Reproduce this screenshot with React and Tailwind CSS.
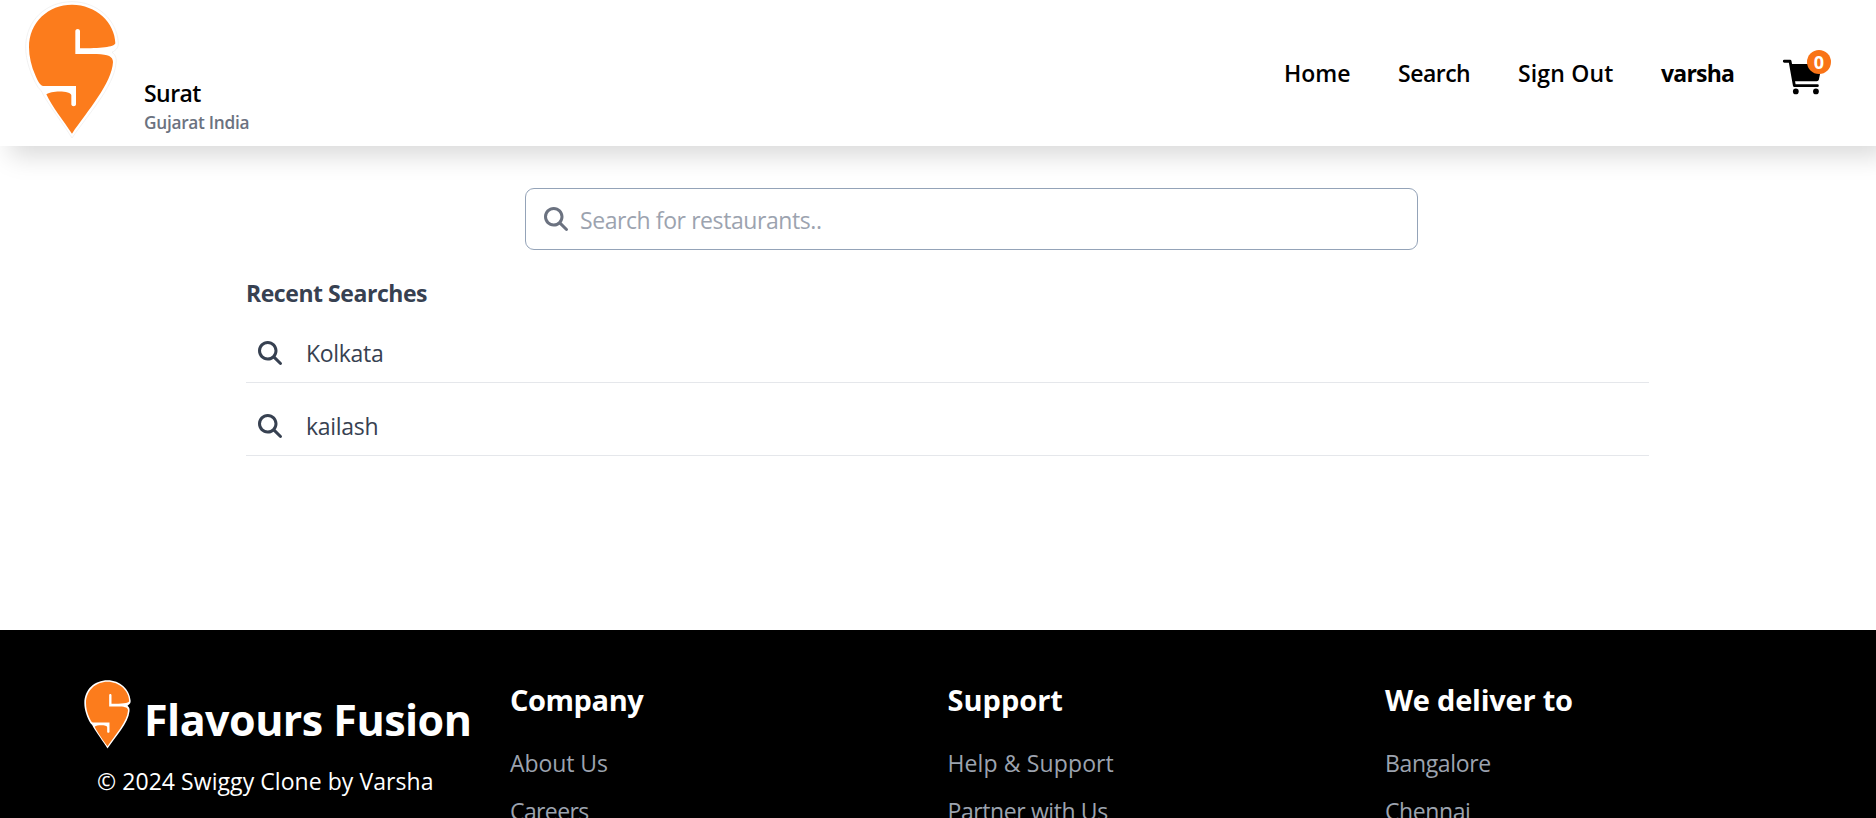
import { FaMagnifyingGlass } from "react-icons/fa6";
import { IoCart } from "react-icons/io5";

function Logo({ className, ringWidth }) {
  return (
    <svg viewBox="75 3 282 414" className={className} preserveAspectRatio="none">
      <path
        d="M216 414C190 372 150 320 130 285C126 274 120 268 114 262C92 225 77 180 77 142C77 60 140 5 216 5C292 5 350 60 355 128C356 140 350 150 336 157C348 165 350 178 348 190C342 260 262 346 216 414Z"
        fill="#fff"
        stroke="#ececec"
        strokeWidth={ringWidth}
      />
      <path
        d="M216 14C288 14 345 68 346 130C343 142 300 145 240 145V94C240 85 226 85 226 94V162H290C325 163 339 170 339 186C336 250 262 333 216 401C190 362 155 318 139 283C152 271 214 271 214 286V313C214 321 228 321 228 313V258H130C120 258 114 244 106 226C94 199 87 170 87 142C87 66 146 14 216 14Z"
        fill="#fc7c1c"
      />
    </svg>
  );
}

const links = [
  { label: "Home", style: "w-[66px]" },
  { label: "Search", style: "w-[72px] tracking-[-0.5px]" },
  { label: "Sign Out", style: "w-[95px] tracking-[0.15px]" },
];

const columns = [
  {
    title: "Company",
    titleStyle: "tracking-[-0.43px]",
    items: [["About Us", "tracking-[-0.06px]"], ["Careers", "tracking-[-0.6px]"]],
  },
  {
    title: "Support",
    titleStyle: "tracking-normal",
    items: [["Help & Support", "tracking-[0.12px]"], ["Partner with Us", "tracking-[-0.4px]"]],
  },
  {
    title: "We deliver to",
    titleStyle: "tracking-[-0.23px]",
    items: [["Bangalore", "tracking-[-0.34px]"], ["Chennai", "tracking-[-0.4px]"]],
  },
];

export default function App() {
  return (
    <div className="flex h-[818px] flex-col overflow-hidden bg-white font-['Open_Sans','Noto_Sans',sans-serif] text-[23px] text-black">
      <header className="flex h-[146px] shrink-0 items-start justify-between bg-white pr-[45px] pl-[25px] shadow-[10px_10px_24px_rgb(0_0_0/0.15)]">
        <div className="flex">
          <Logo className="mt-px h-[138px] w-[94px]" ringWidth={2} />
          <div className="mt-[75px] ml-[25px]">
            <p className="leading-9 font-semibold tracking-[-0.55px]">Surat</p>
            <p className="mt-px text-[17.25px] leading-[22px] font-semibold tracking-[-0.28px] text-[#6b7280]">Gujarat India</p>
          </div>
        </div>
        <nav className="mt-[55px] flex items-start gap-12 leading-9 font-semibold whitespace-nowrap">
          {links.map((l) => (
            <a key={l.label} className={l.style}>{l.label}</a>
          ))}
          <a className="w-[71px] font-bold tracking-[-0.8px]">varsha</a>
          <div className="relative h-9 w-[51px]">
            <IoCart className="-mt-px size-[46px]" />
            <span className="absolute -top-[5px] right-0 flex size-6 items-center justify-center rounded-full bg-[#f97316] text-lg leading-none font-bold text-white">0</span>
          </div>
        </nav>
      </header>

      <main className="flex h-[484px] shrink-0 flex-col pt-[42px]">
        <div className="ml-[525px] flex h-[62px] w-[893px] items-center rounded-[9px] border border-[#94a3b8] pl-[18px]">
          <FaMagnifyingGlass className="size-6 text-[#6b7280]" />
          <span className="ml-3 pt-0.5 tracking-[-0.42px] text-[#9ca3af]">Search for restaurants..</span>
        </div>
        <section className="mt-[26px] ml-[246px] w-[1403px] text-[#374151]">
          <h2 className="leading-[34px] font-bold tracking-[-0.45px]">Recent Searches</h2>
          {["Kolkata", "kailash"].map((term) => (
            <div key={term} className="flex h-[73px] items-end border-b border-[#e5e7eb] pb-[11px] pl-3">
              <FaMagnifyingGlass className="mb-[6px] size-6" />
              <span className="ml-6 leading-9 tracking-[-0.3px]">{term}</span>
            </div>
          ))}
        </section>
      </main>

      <footer className="flex h-[188px] shrink-0 overflow-hidden bg-black pl-[84px] text-white">
        <div className="w-[426px] shrink-0 pt-[50px] whitespace-nowrap">
          <div className="flex h-[68px]">
            <Logo className="h-[69px] w-[47px]" ringWidth={0} />
            <span className="mt-3 ml-[13px] text-[43px] leading-[56px] font-bold tracking-[-0.53px]">Flavours Fusion</span>
          </div>
          <p className="mt-[15px] ml-[13px] leading-9 tracking-[0.06px]">© 2024 Swiggy Clone by Varsha</p>
        </div>
        {columns.map((c) => (
          <div key={c.title} className="w-[437.5px] shrink-0 pt-[49px]">
            <h3 className="text-[29px] leading-[42px] font-bold">
              <span className={c.titleStyle}>{c.title}</span>
            </h3>
            <ul className="mt-6 flex flex-col gap-3 text-[#9ca3af]">
              {c.items.map(([label, style]) => (
                <li key={label} className="leading-9">
                  <span className={style}>{label}</span>
                </li>
              ))}
            </ul>
          </div>
        ))}
      </footer>
    </div>
  );
}
